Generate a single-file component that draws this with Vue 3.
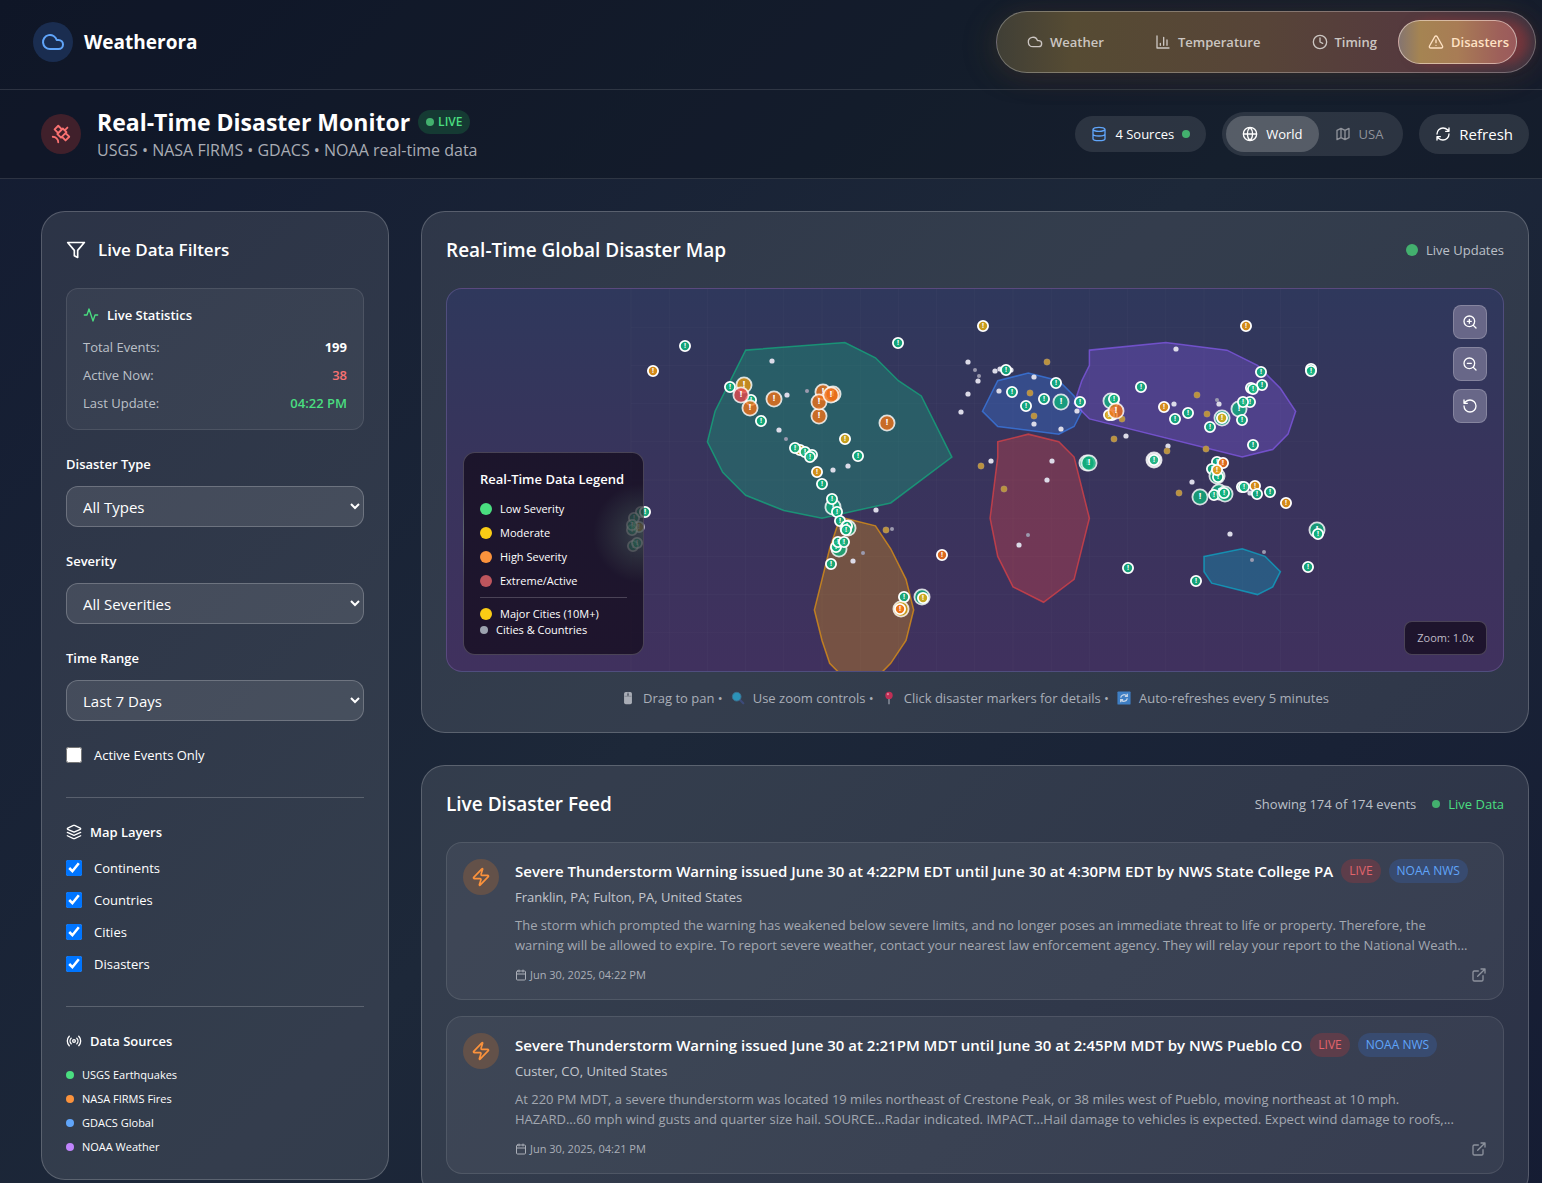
<template>
  <div class="app">
    <header class="topbar">
      <a href="#" class="brand">
        <span class="round round-blue"><Icon name="cloud" :size="24" /></span>
        <span class="brand-name">Weatherora</span>
      </a>
      <nav class="nav">
        <a
          v-for="item in navItems"
          :key="item.label"
          href="#"
          class="nav-item"
          :class="{ active: item.active }"
        >
          <Icon :name="item.icon" :size="16" />
          <span>{{ item.label }}</span>
        </a>
      </nav>
    </header>

    <section class="subbar">
      <div class="round round-red"><Icon name="satellite" :size="22" /></div>
      <div class="subbar-text">
        <div class="title-row">
          <h1>Real-Time Disaster Monitor</h1>
          <span class="live-pill"><i class="dot dot-8"></i>LIVE</span>
        </div>
        <p>USGS • NASA FIRMS • GDACS • NOAA real-time data</p>
      </div>
      <div class="controls">
        <div class="sources-pill">
          <Icon name="database" :size="16" />
          <span>4 Sources</span>
          <i class="dot dot-8"></i>
        </div>
        <div class="toggle">
          <button
            v-for="v in views"
            :key="v.id"
            type="button"
            :class="{ on: view === v.id }"
            @click="view = v.id"
          >
            <Icon :name="v.icon" :size="16" />
            <span>{{ v.label }}</span>
          </button>
        </div>
        <button type="button" class="refresh"><Icon name="refresh" :size="16" />Refresh</button>
      </div>
    </section>

    <main class="layout">
      <aside class="panel sidebar">
        <h2 class="panel-title"><Icon name="filter" :size="20" />Live Data Filters</h2>

        <div class="stats">
          <h3 class="small-title"><Icon name="activity" :size="16" class="green" />Live Statistics</h3>
          <div v-for="s in stats" :key="s.label" class="stat">
            <span>{{ s.label }}</span>
            <strong :class="s.tone">{{ s.value }}</strong>
          </div>
        </div>

        <div v-for="f in filters" :key="f.id" class="field">
          <label :for="f.id">{{ f.label }}</label>
          <select :id="f.id">
            <option>{{ f.value }}</option>
          </select>
        </div>

        <label class="check"><input v-model="activeOnly" type="checkbox" />Active Events Only</label>

        <div class="group">
          <h3 class="small-title"><Icon name="layers" :size="16" />Map Layers</h3>
          <label v-for="l in layers" :key="l.label" class="check">
            <input v-model="l.on" type="checkbox" />{{ l.label }}
          </label>
        </div>

        <div class="group">
          <h3 class="small-title"><Icon name="radio" :size="16" />Data Sources</h3>
          <ul class="sources">
            <li v-for="s in sources" :key="s.label"><i class="dot dot-8" :class="s.tone"></i>{{ s.label }}</li>
          </ul>
        </div>
      </aside>

      <div class="content">
        <section class="panel">
          <div class="panel-head">
            <h2 class="panel-title">Real-Time Global Disaster Map</h2>
            <span class="updates"><i class="dot dot-12"></i>Live Updates</span>
          </div>

          <div class="map">
            <svg class="world" viewBox="0 0 688 382">
              <g class="grid">
                <line v-for="n in 19" :key="'v' + n" :x1="(n - 1) * 38.2" y1="0" :x2="(n - 1) * 38.2" y2="382" />
                <line v-for="n in 9" :key="'h' + n" x1="0" :y1="n * 38.2" x2="688" :y2="n * 38.2" />
              </g>
              <g v-if="layers[0].on" transform="scale(0.764)">
                <polygon v-for="c in continents" :key="c.name" class="land" :class="c.name" :points="c.points" />
              </g>
              <g v-if="layers[2].on">
                <circle v-for="(c, i) in smallCities" :key="'s' + i" class="city-small" :cx="c[0]" :cy="c[1]" r="2" />
                <circle v-for="(c, i) in cities" :key="'c' + i" class="city" :cx="c[0]" :cy="c[1]" r="2.6" />
                <circle v-for="(c, i) in majorCities" :key="'m' + i" class="city-major" :cx="c[0]" :cy="c[1]" r="3.2" />
              </g>
              <g v-if="layers[3].on">
                <g
                  v-for="(e, i) in events"
                  :key="'e' + i"
                  class="marker"
                  :class="[e[2], { strong: e[3], faint: e[4] }]"
                  :transform="`translate(${e[0]} ${e[1]})`"
                >
                  <circle :r="e[3] ? 7.6 : 5.1" />
                  <text y="2">!</text>
                </g>
              </g>
            </svg>

            <div class="zoom-tools">
              <button type="button" aria-label="Zoom in"><Icon name="zoomIn" :size="16" /></button>
              <button type="button" aria-label="Zoom out"><Icon name="zoomOut" :size="16" /></button>
              <button type="button" aria-label="Reset view"><Icon name="rotate" :size="16" /></button>
            </div>

            <div class="legend">
              <h3>Real-Time Data Legend</h3>
              <ul>
                <li v-for="l in legend" :key="l.label"><i class="dot dot-12" :class="l.tone"></i>{{ l.label }}</li>
              </ul>
              <div class="legend-cities">
                <div><i class="dot dot-12 yellow"></i>Major Cities (10M+)</div>
                <div><i class="dot dot-8 gray"></i>Cities &amp; Countries</div>
              </div>
            </div>

            <div class="zoom-level">Zoom: 1.0x</div>
          </div>

          <p class="hints">
            <svg class="emoji" viewBox="0 0 16 16">
              <rect x="3.500" y="1" width="9" height="14" rx="2" fill="#a9adb6" />
              <path d="M8 1v5M4 6h8" stroke="#7d838e" fill="none" />
              <rect x="7" y="2.500" width="2" height="3" rx="1" fill="#5d6470" />
            </svg>
            <span>Drag to pan •</span>
            <svg class="emoji" viewBox="0 0 16 16">
              <path d="m9.500 9.500 4.500 4.500" stroke="#3c4a78" stroke-width="2.600" stroke-linecap="round" />
              <circle cx="6.500" cy="6.500" r="5" fill="#2c93b8" stroke="#3b6f8e" />
            </svg>
            <span>Use zoom controls •</span>
            <svg class="emoji" viewBox="0 0 16 16">
              <path d="M8 8v7" stroke="#9aa1ad" stroke-width="1.400" />
              <circle cx="8" cy="5" r="4.200" fill="#c02f55" />
              <circle cx="6.800" cy="3.600" r="1.200" fill="#e0809a" />
            </svg>
            <span>Click disaster markers for details •</span>
            <svg class="emoji" viewBox="0 0 16 16">
              <rect x="0.500" y="0.500" width="15" height="15" rx="1" fill="#3f7fc4" />
              <path
                d="M11.800 8.500a4 4 0 0 1-7 1.800M4.200 7.500a4 4 0 0 1 7-1.800M11.800 3.200v3H9M4.200 12.800v-3H7"
                fill="none"
                stroke="#c3d3e6"
                stroke-width="1.500"
              />
            </svg>
            <span>Auto-refreshes every 5 minutes</span>
          </p>
        </section>

        <section class="panel">
          <div class="panel-head">
            <h2 class="panel-title">Live Disaster Feed</h2>
            <div class="feed-meta">
              <span>Showing 174 of 174 events</span>
              <span class="live-data"><i class="dot dot-8"></i>Live Data</span>
            </div>
          </div>

          <article v-for="e in feed" :key="e.title" class="event">
            <div class="event-icon"><Icon name="zap" :size="20" /></div>
            <div class="event-body">
              <div class="event-head">
                <h3>{{ e.title }}</h3>
                <span class="tag tag-red">LIVE</span>
                <span class="tag tag-blue">NOAA NWS</span>
              </div>
              <p class="place">{{ e.place }}</p>
              <p class="desc">{{ e.text }}</p>
              <div class="event-foot">
                <span class="date"><Icon name="calendar" :size="12" />{{ e.date }}</span>
                <a href="#" aria-label="Open source"><Icon name="external" :size="16" /></a>
              </div>
            </div>
          </article>
        </section>
      </div>
    </main>
  </div>
</template>

<script setup>
import { h, ref } from 'vue'

const circle = 'M2 12a10 10 0 1 0 20 0 10 10 0 1 0-20 0'
const lens = 'M3 11a8 8 0 1 0 16 0 8 8 0 1 0-16 0m18 10-4.350-4.350'

const icons = {
  cloud: 'M17.500 19H9a7 7 0 1 1 6.710-9h1.790a4.500 4.500 0 1 1 0 9Z',
  chart: 'M3 3v18h18M18 17V9M13 17V5M8 17v-3',
  clock: circle + 'M12 6v6l4 2',
  alert: 'm21.730 18-8-14a2 2 0 0 0-3.480 0l-8 14A2 2 0 0 0 4 21h16a2 2 0 0 0 1.730-3ZM12 9v4M12 17h.01',
  satellite: 'M13 7 9 3 5 7l4 4M17 11l4 4-4 4-4-4M8 12l4 4 6-6-4-4ZM16 8l3-3M9 21a6 6 0 0 0-6-6',
  database: 'M3 5a9 3 0 1 0 18 0 9 3 0 1 0-18 0M3 5v14a9 3 0 0 0 18 0V5M3 12a9 3 0 0 0 18 0',
  globe: circle + 'M12 2a14.500 14.500 0 0 0 0 20 14.500 14.500 0 0 0 0-20M2 12h20',
  map: 'M3 6.500v14l6-3 6 3 6-3v-14l-6 3-6-3ZM9 3.500v14M15 6.500v14',
  refresh:
    'M3 12a9 9 0 0 1 9-9 9.750 9.750 0 0 1 6.740 2.740L21 8M21 3v5h-5M21 12a9 9 0 0 1-9 9 9.750 9.750 0 0 1-6.740-2.740L3 16M8 16H3v5',
  filter: 'M22 3H2l8 9.460V19l4 2v-8.540Z',
  activity: 'M22 12h-4l-3 9L9 3l-3 9H2',
  layers:
    'M12.830 2.180a2 2 0 0 0-1.660 0L2.600 6.080a1 1 0 0 0 0 1.830l8.580 3.910a2 2 0 0 0 1.660 0l8.580-3.900a1 1 0 0 0 0-1.830ZM22 17.650l-9.170 4.160a2 2 0 0 1-1.660 0L2 17.650M22 12.650l-9.170 4.160a2 2 0 0 1-1.660 0L2 12.650',
  radio:
    'M4.900 19.100C1 15.200 1 8.800 4.900 4.900M7.800 16.200c-2.300-2.300-2.300-6.100 0-8.500M10 12a2 2 0 1 0 4 0 2 2 0 1 0-4 0M16.200 7.800c2.300 2.300 2.300 6.100 0 8.500M19.100 4.900C23 8.800 23 15.100 19.100 19',
  zap: 'M4 14a1 1 0 0 1-.78-1.630l9.900-10.200a.5.5 0 0 1 .86.46l-1.920 6.020A1 1 0 0 0 13 10h7a1 1 0 0 1 .78 1.630l-9.900 10.200a.5.5 0 0 1-.86-.46l1.920-6.020A1 1 0 0 0 11 14z',
  calendar: 'M5 4h14a2 2 0 0 1 2 2v14a2 2 0 0 1-2 2H5a2 2 0 0 1-2-2V6a2 2 0 0 1 2-2ZM16 2v4M8 2v4M3 10h18',
  external: 'M15 3h6v6M10 14 21 3M18 13v6a2 2 0 0 1-2 2H5a2 2 0 0 1-2-2V8a2 2 0 0 1 2-2h6',
  zoomIn: lens + 'M11 8v6M8 11h6',
  zoomOut: lens + 'M8 11h6',
  rotate: 'M3 12a9 9 0 1 0 9-9 9.750 9.750 0 0 0-6.740 2.740L3 8M3 3v5h5',
}

const Icon = (props) =>
  h(
    'svg',
    {
      width: props.size,
      height: props.size,
      viewBox: '0 0 24 24',
      fill: 'none',
      stroke: 'currentColor',
      'stroke-width': 2,
      'stroke-linecap': 'round',
      'stroke-linejoin': 'round',
      'aria-hidden': 'true',
    },
    [h('path', { d: icons[props.name] })],
  )
Icon.props = ['name', 'size']

const navItems = [
  { label: 'Weather', icon: 'cloud' },
  { label: 'Temperature', icon: 'chart' },
  { label: 'Timing', icon: 'clock' },
  { label: 'Disasters', icon: 'alert', active: true },
]

const view = ref('world')
const views = [
  { id: 'world', label: 'World', icon: 'globe' },
  { id: 'usa', label: 'USA', icon: 'map' },
]

const stats = [
  { label: 'Total Events:', value: '199', tone: 'white' },
  { label: 'Active Now:', value: '38', tone: 'red' },
  { label: 'Last Update:', value: '04:22 PM', tone: 'green' },
]

const filters = [
  { id: 'type', label: 'Disaster Type', value: 'All Types' },
  { id: 'severity', label: 'Severity', value: 'All Severities' },
  { id: 'range', label: 'Time Range', value: 'Last 7 Days' },
]

const activeOnly = ref(false)
const layers = ref([
  { label: 'Continents', on: true },
  { label: 'Countries', on: true },
  { label: 'Cities', on: true },
  { label: 'Disasters', on: true },
])

const sources = [
  { label: 'USGS Earthquakes', tone: 'bg-green' },
  { label: 'NASA FIRMS Fires', tone: 'bg-orange' },
  { label: 'GDACS Global', tone: 'bg-blue' },
  { label: 'NOAA Weather', tone: 'bg-purple' },
]

const legend = [
  { label: 'Low Severity', tone: 'bg-green' },
  { label: 'Moderate', tone: 'yellow' },
  { label: 'High Severity', tone: 'bg-orange' },
  { label: 'Extreme/Active', tone: 'bg-red' },
]

const continents = [
  {
    name: 'north-america',
    points: '150,80 280,70 320,90 350,120 380,140 420,220 340,280 250,300 200,290 150,270 120,240 100,200 110,160',
  },
  {
    name: 'south-america',
    points: '280,300 320,310 340,340 360,380 370,420 360,460 340,490 320,510 280,510 260,490 250,460 240,420 250,380 260,340 270,310',
  },
  { name: 'europe', points: '460,160 480,120 520,110 560,120 580,140 590,160 580,180 560,190 480,180' },
  { name: 'africa', points: '480,200 520,190 560,200 580,220 600,300 580,380 540,410 500,390 480,350 470,300 480,220' },
  {
    name: 'asia',
    points: '600,80 700,70 780,80 820,100 850,130 870,160 860,190 840,210 800,220 600,170 580,150 590,120 600,100',
  },
  { name: 'australia', points: '750,350 800,340 830,350 850,370 840,390 820,400 760,385 750,370' },
]

const cities = [
  [141, 72], [156, 106], [148, 141], [217, 177], [202, 181], [245, 221], [222, 272], [337, 73], [347, 92],
  [337, 105], [330, 123], [364, 82], [369, 80], [380, 81], [403, 88], [368, 102], [446, 122], [403, 135],
  [430, 140], [360, 172], [421, 172], [416, 191], [388, 256], [495, 147], [545, 60], [543, 115], [588, 115],
  [537, 157], [561, 193], [619, 204], [599, 245],
]

const smallCities = [
  [176, 102], [155, 150], [261, 240], [232, 264], [344, 81], [348, 87], [397, 246], [586, 111], [633, 263], [621, 271],
]

const majorCities = [
  [255, 241], [416, 73], [399, 104], [403, 127], [491, 130], [483, 150], [350, 177], [373, 200], [566, 106],
  [576, 125], [536, 162], [575, 160], [548, 204],
]

// x, y, severity, strong event, behind the legend
const events = [
  [8, 238, 'amber', 0, 1], [10, 223, 'low', 0, 1], [3, 229, 'low', 0, 1], [1, 241, 'low', 0, 1], [1, 236, 'low', 0, 1],
  [2, 257, 'low', 0, 1], [6, 254, 'low', 0, 1], [14, 223, 'low'],
  [54, 57, 'low'], [22, 82, 'amber'], [267, 54, 'low'], [99, 98, 'low'], [113, 96, 'amber', 1], [120, 111, 'low'],
  [119, 119, 'high', 1], [110, 106, 'extreme', 1], [130, 132, 'low'], [143, 110, 'high', 1], [192, 103, 'high', 1],
  [188, 127, 'high', 1], [188, 113, 'high', 1], [202, 105, 'high', 1], [200, 106, 'high', 1], [256, 134, 'high', 1],
  [214, 150, 'moderate'], [227, 167, 'low'], [169, 161, 'moderate'], [174, 163, 'low'], [164, 159, 'low'],
  [181, 166, 'low'], [179, 168, 'low'], [186, 183, 'amber'], [191, 195, 'low'], [202, 218, 'low', 1],
  [201, 210, 'low'], [206, 223, 'low'], [209, 232, 'low'], [217, 239, 'low', 1], [216, 237, 'low'],
  [215, 241, 'low'], [208, 260, 'low', 1], [205, 258, 'low'], [207, 253, 'low'], [213, 253, 'low'],
  [200, 275, 'low'], [273, 308, 'low'], [291, 308, 'low', 1], [292, 309, 'moderate'], [270, 320, 'moderate', 1],
  [269, 320, 'high'], [311, 266, 'high'],
  [352, 37, 'moderate'], [375, 81, 'low'], [425, 94, 'low'], [381, 103, 'low'], [413, 110, 'low'],
  [395, 117, 'low'], [430, 113, 'low', 1], [449, 113, 'low'], [456, 174, 'low', 1], [458, 174, 'low', 1],
  [480, 112, 'low', 1], [483, 110, 'low'], [481, 126, 'low'], [478, 126, 'moderate'], [485, 122, 'high', 1],
  [510, 98, 'low'], [533, 118, 'amber'], [557, 124, 'low'], [544, 130, 'low'], [579, 138, 'low'],
  [591, 129, 'low', 1], [591, 129, 'moderate'], [608, 120, 'low', 1], [619, 113, 'low'], [612, 113, 'low'],
  [611, 131, 'low'], [622, 156, 'low'], [615, 37, 'amber'], [680, 80, 'low'], [680, 82, 'low'], [630, 83, 'low'],
  [631, 96, 'low'], [620, 99, 'low'], [622, 100, 'low'], [523, 171, 'plain', 1], [523, 171, 'low'],
  [586, 173, 'low'], [592, 174, 'high'], [581, 180, 'low'], [586, 187, 'low', 1], [587, 188, 'low'],
  [586, 181, 'amber'], [569, 208, 'low', 1], [588, 203, 'low', 1], [583, 206, 'low'], [594, 205, 'low', 1],
  [593, 204, 'low'], [611, 198, 'low'], [613, 198, 'low'], [624, 197, 'amber'], [626, 205, 'low'],
  [639, 203, 'low'], [655, 214, 'amber'], [686, 241, 'low', 1], [687, 245, 'low'], [677, 278, 'low'],
  [497, 279, 'low'], [565, 292, 'low'],
]

const feed = [
  {
    title: 'Severe Thunderstorm Warning issued June 30 at 4:22PM EDT until June 30 at 4:30PM EDT by NWS State College PA',
    place: 'Franklin, PA; Fulton, PA, United States',
    text: 'The storm which prompted the warning has weakened below severe limits, and no longer poses an immediate threat to life or property. Therefore, the\nwarning will be allowed to expire. To report severe weather, contact your nearest law enforcement agency. They will relay your report to the National Weath...',
    date: 'Jun 30, 2025, 04:22 PM',
  },
  {
    title: 'Severe Thunderstorm Warning issued June 30 at 2:21PM MDT until June 30 at 2:45PM MDT by NWS Pueblo CO',
    place: 'Custer, CO, United States',
    text: 'At 220 PM MDT, a severe thunderstorm was located 19 miles northeast of Crestone Peak, or 38 miles west of Pueblo, moving northeast at 10 mph.\nHAZARD...60 mph wind gusts and quarter size hail. SOURCE...Radar indicated. IMPACT...Hail damage to vehicles is expected. Expect wind damage to roofs,...',
    date: 'Jun 30, 2025, 04:21 PM',
  },
]
</script>

<style>
html {
  background: #141c30;
  scrollbar-width: none;
}

body {
  margin: 0;
}
</style>

<style scoped>
* {
  box-sizing: border-box;
}

.app {
  min-height: 100vh;
  font-family: 'Open Sans', 'Noto Sans', sans-serif;
  font-size: 13px;
  line-height: 20px;
  color: #fff;
  background: linear-gradient(135deg, #131b31 0%, #1d2839 50%, #151c33 100%);
}

h1,
h2,
h3,
p,
ul {
  margin: 0;
  padding: 0;
  list-style: none;
}

svg {
  flex-shrink: 0;
}

button,
select {
  font-family: inherit;
  color: inherit;
}

button {
  border: none;
  cursor: pointer;
}

.dot {
  display: inline-block;
  flex-shrink: 0;
  border-radius: 50%;
  background: #43b06e;
}

.dot-8 {
  width: 8px;
  height: 8px;
}

.dot-12 {
  width: 12px;
  height: 12px;
}

.bg-green {
  background: #4ade80;
}

.bg-orange {
  background: #fb923c;
}

.bg-blue {
  background: #60a5fa;
}

.bg-purple {
  background: #c084fc;
}

.bg-red {
  background: #bd555d;
}

.yellow {
  background: #facc15;
}

.gray {
  background: #9ca3af;
}

.green {
  color: #4ade80;
}

/* header */
.topbar,
.subbar {
  display: flex;
  align-items: center;
  background: rgba(10, 14, 22, 0.35);
  border-bottom: 1px solid rgba(255, 255, 255, 0.12);
}

.topbar {
  height: 90px;
  padding: 0 6px 6px 33px;
  justify-content: space-between;
}

.brand {
  display: flex;
  align-items: center;
  gap: 11px;
  color: #fff;
  text-decoration: none;
}

.brand-name {
  font-size: 19px;
  font-weight: 700;
}

.round {
  display: flex;
  align-items: center;
  justify-content: center;
  flex-shrink: 0;
  width: 40px;
  height: 40px;
  border-radius: 50%;
}

.round-blue {
  background: #1a2d50;
  color: #60a5fa;
}

.round-red {
  background: #40202b;
  color: #f87171;
}

.nav {
  display: flex;
  justify-content: space-between;
  align-items: center;
  width: 540px;
  height: 62px;
  padding: 0 26px 0 30px;
  border: 1px solid rgba(255, 255, 255, 0.28);
  border-radius: 31px;
  background: linear-gradient(90deg, #403f36 0%, #564b33 14%, #574438 50%, #553a3e 76%, #3d3440 100%);
  box-shadow: -8px 4px 30px rgba(120, 100, 30, 0.16), 8px 4px 30px rgba(120, 40, 50, 0.16);
}

.nav-item {
  position: relative;
  display: flex;
  align-items: center;
  gap: 7px;
  height: 44px;
  font-size: 13px;
  font-weight: 600;
  color: #ccc6c2;
  text-decoration: none;
}

.nav-item > * {
  position: relative;
}

.nav-item.active {
  color: #ffe2c4;
}

.nav-item.active::before {
  content: '';
  position: absolute;
  inset: 0 -8px 0 -30px;
  border: 1px solid rgba(255, 235, 225, 0.55);
  border-radius: 22px;
  background: linear-gradient(90deg, #857570 0%, #a58452 18%, #a87c55 50%, #9e605a 85%, #9a5a5c 100%);
  box-shadow: 12px 0 12px rgba(170, 55, 55, 0.5);
}

.subbar {
  height: 89px;
  padding: 0 13px 0 41px;
  gap: 16px;
}

.subbar-text {
  flex: 1;
}

.title-row {
  display: flex;
  align-items: center;
  gap: 8px;
}

h1 {
  font-size: 23px;
  line-height: 32px;
  font-weight: 700;
}

.subbar-text p {
  font-size: 16px;
  line-height: 24px;
  color: #a9acb4;
}

.live-pill {
  display: flex;
  align-items: center;
  gap: 4px;
  padding: 2px 8px;
  border-radius: 12px;
  font-size: 12px;
  font-weight: 600;
  background: #153a33;
  color: #4ade80;
}

.controls {
  display: flex;
  align-items: center;
  gap: 16px;
  font-size: 13px;
}

.sources-pill,
.toggle,
.refresh {
  background: rgba(255, 255, 255, 0.1);
}

.sources-pill {
  display: flex;
  align-items: center;
  gap: 8px;
  height: 36px;
  padding: 0 16px;
  border-radius: 18px;
}

.sources-pill svg {
  color: #60a5fa;
}

.toggle {
  display: flex;
  padding: 4px;
  border-radius: 22px;
}

.toggle button {
  display: flex;
  align-items: center;
  gap: 8px;
  height: 36px;
  padding: 0 16px;
  border-radius: 18px;
  font-size: 13px;
  background: none;
  color: #8f929a;
}

.toggle button.on {
  background: rgba(255, 255, 255, 0.2);
  color: #fff;
}

.refresh {
  display: flex;
  align-items: center;
  gap: 8px;
  height: 40px;
  padding: 0 16px;
  border-radius: 20px;
  font-size: 15px;
}

/* page grid */
.layout {
  display: grid;
  grid-template-columns: repeat(4, 1fr);
  align-items: start;
  gap: 32px;
  padding: 32px 13px 32px 41px;
}

.content {
  grid-column: span 3;
  display: flex;
  flex-direction: column;
  gap: 32px;
  min-width: 0;
}

.panel {
  padding: 24px;
  border: 1px solid rgba(255, 255, 255, 0.2);
  border-radius: 24px;
  background: rgba(255, 255, 255, 0.1);
}

.panel-title {
  display: flex;
  align-items: center;
  gap: 12px;
  font-size: 19px;
  line-height: 28px;
  font-weight: 600;
}

.panel-head {
  display: flex;
  align-items: center;
  justify-content: space-between;
  margin-bottom: 24px;
}

.sidebar .panel-title {
  margin-bottom: 24px;
  font-size: 17px;
}

.small-title {
  display: flex;
  align-items: center;
  gap: 8px;
  font-size: 13px;
  font-weight: 600;
}

.stats {
  display: flex;
  flex-direction: column;
  gap: 8px;
  padding: 16px;
  margin-bottom: 24px;
  border: 1px solid rgba(255, 255, 255, 0.1);
  border-radius: 12px;
  background: rgba(255, 255, 255, 0.05);
}

.stats .small-title {
  margin-bottom: 4px;
}

.stat {
  display: flex;
  justify-content: space-between;
  color: #bcc0c8;
}

.stat strong {
  font-weight: 600;
}

.stat .white {
  font-weight: 700;
  color: #fff;
}

.stat .red {
  color: #f87171;
}

.stat .green {
  color: #4ade80;
}

.field {
  margin-bottom: 24px;
}

.field label {
  display: block;
  margin-bottom: 12px;
  font-weight: 600;
}

select {
  display: block;
  width: 100%;
  height: 41px;
  padding: 0 0 0 12px;
  border: 1px solid rgba(255, 255, 255, 0.22);
  border-radius: 12px;
  font-size: 15px;
  background: rgba(255, 255, 255, 0.1);
}

.check {
  display: flex;
  align-items: center;
  gap: 12px;
}

.check input {
  width: 16px;
  height: 16px;
  margin: 0;
}

.group {
  margin-top: 32px;
  padding-top: 24px;
  border-top: 1px solid rgba(255, 255, 255, 0.2);
}

.group .small-title {
  margin-bottom: 16px;
}

.group .check + .check {
  margin-top: 12px;
}

.sources {
  display: flex;
  flex-direction: column;
  gap: 8px;
  font-size: 11px;
  line-height: 16px;
}

.sources li {
  display: flex;
  align-items: center;
  gap: 8px;
}

/* map */
.updates,
.live-data,
.feed-meta {
  display: flex;
  align-items: center;
  gap: 8px;
  color: #bcc0c8;
}

.feed-meta {
  gap: 16px;
}

.feed-meta .live-data {
  color: #4ade80;
}

.map {
  position: relative;
  height: 384px;
  overflow: hidden;
  border: 1px solid rgba(140, 120, 190, 0.35);
  border-radius: 16px;
  background: linear-gradient(180deg, #2f385c 0%, #38345c 45%, #40315e 100%);
}

.world {
  display: block;
  width: 100%;
  height: 100%;
}

.grid line {
  stroke: rgba(255, 255, 255, 0.025);
}

.land {
  fill-opacity: 0.3;
  stroke-opacity: 0.65;
  stroke-width: 2;
}

.north-america {
  fill: #10b981;
  stroke: #10b981;
}

.south-america {
  fill: #f59e0b;
  stroke: #f59e0b;
}

.europe {
  fill: #3b82f6;
  stroke: #3b82f6;
}

.africa {
  fill: #ef4444;
  stroke: #ef4444;
}

.asia {
  fill: #8b5cf6;
  stroke: #8b5cf6;
}

.australia {
  fill: #06b6d4;
  stroke: #06b6d4;
}

.city {
  fill: #dcdbe8;
}

.city-small {
  fill: #9b9aae;
}

.city-major {
  fill: #bb923f;
  stroke: rgba(150, 150, 170, 0.5);
  stroke-width: 0.5;
}

.marker circle {
  stroke: #fff;
  stroke-width: 1.8;
  fill-opacity: 0.88;
}

.marker text {
  fill: #fff;
  font-size: 7px;
  font-weight: 700;
  text-anchor: middle;
}

.marker.strong circle {
  stroke-opacity: 0.8;
  fill-opacity: 0.8;
}

.marker.strong text {
  font-size: 9px;
}

.marker.faint {
  opacity: 0.6;
}

.low circle {
  fill: #10b07c;
}

.moderate circle {
  fill: #dcaa14;
}

.amber circle {
  fill: #e8950f;
}

.high circle {
  fill: #f07018;
}

.extreme circle {
  fill: #e5484d;
}

.plain circle {
  fill: #fff;
}

.zoom-tools {
  position: absolute;
  top: 16px;
  right: 16px;
  display: flex;
  flex-direction: column;
  gap: 8px;
}

.zoom-tools button {
  display: flex;
  align-items: center;
  justify-content: center;
  width: 34px;
  height: 34px;
  padding: 0;
  border: 1px solid rgba(255, 255, 255, 0.2);
  border-radius: 8px;
  background: #686788;
}

.legend,
.zoom-level {
  position: absolute;
  bottom: 16px;
  border: 1px solid rgba(255, 255, 255, 0.2);
  background: rgba(18, 10, 26, 0.72);
  font-size: 11px;
  line-height: 16px;
}

.legend {
  left: 16px;
  width: 181px;
  padding: 16px;
  border-radius: 12px;
  background: radial-gradient(circle at 100% 40%, rgba(54, 72, 66, 0.7), rgba(18, 10, 26, 0.72) 50px);
}

.legend h3 {
  margin-bottom: 12px;
  font-size: 13px;
  line-height: 20px;
  font-weight: 600;
  white-space: nowrap;
}

.legend li,
.legend-cities div {
  display: flex;
  align-items: center;
  gap: 8px;
}

.legend li {
  margin-bottom: 8px;
}

.legend-cities {
  padding-top: 8px;
  border-top: 1px solid rgba(255, 255, 255, 0.2);
}

.zoom-level {
  right: 16px;
  padding: 8px 12px;
  border-radius: 8px;
  color: #bfbbc6;
}

.hints {
  display: flex;
  justify-content: center;
  align-items: center;
  gap: 8px;
  margin-top: 16px;
  color: #a9aeb8;
}

.emoji {
  width: 14px;
  height: 14px;
}

/* feed */
.event {
  display: flex;
  align-items: flex-start;
  gap: 16px;
  padding: 16px;
  border: 1px solid rgba(255, 255, 255, 0.1);
  border-radius: 16px;
  background: rgba(255, 255, 255, 0.05);
}

.event + .event {
  margin-top: 16px;
}

.event-icon {
  display: flex;
  align-items: center;
  justify-content: center;
  flex-shrink: 0;
  width: 36px;
  height: 36px;
  border-radius: 50%;
  background: #635149;
  color: #fb923c;
}

.event-body {
  flex: 1;
  min-width: 0;
}

.event-head {
  display: flex;
  align-items: center;
  gap: 8px;
  margin-bottom: 4px;
}

.event-head h3 {
  font-size: 15px;
  line-height: 24px;
  font-weight: 600;
  white-space: nowrap;
}

.tag {
  flex-shrink: 0;
  padding: 4px 8px;
  border-radius: 12px;
  font-size: 12px;
  line-height: 16px;
}

.tag-red {
  background: #5d3d4a;
  color: #e2646c;
}

.tag-blue {
  background: #384b70;
  color: #60a5fa;
}

.place {
  color: #c4c7ce;
}

.desc {
  margin: 8px 0 12px;
  color: #a3a8b1;
  white-space: pre-line;
}

.event-foot {
  display: flex;
  align-items: center;
  justify-content: space-between;
  height: 16px;
  font-size: 11px;
  line-height: 16px;
  color: #abafb8;
}

.date {
  display: flex;
  align-items: center;
  gap: 3px;
}

.event-foot a {
  display: flex;
  color: #8d929d;
}
</style>
